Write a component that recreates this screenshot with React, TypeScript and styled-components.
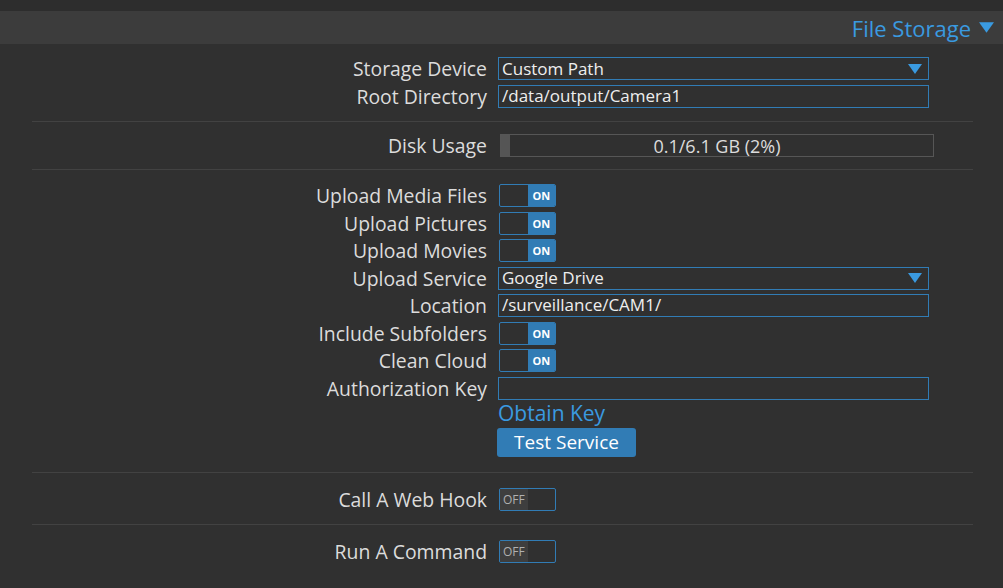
import React from 'react';
import styled, {createGlobalStyle} from 'styled-components';

const GlobalStyle = createGlobalStyle`
  body {
    margin: 0;
    background: #303030;
    font-family: "Open Sans", "DejaVu Sans", sans-serif;
  }
`

const BLUE = '#317cb5'
const LINK = '#3a9ae0'

const Arrow = ({w, h}: {w: number, h: number}) => (
    <svg width={w} height={h} viewBox="0 0 14 10">
        <polygon points="0,0 14,0 7,10" fill={LINK}/>
    </svg>
)

const Toggle = ({on}: {on: boolean}) => (
    <ToggleBox>
        <ToggleHalf $active={!on}>{!on && 'OFF'}</ToggleHalf>
        <ToggleHalf $active={on} $on>{on && 'ON'}</ToggleHalf>
    </ToggleBox>
)

const Row = ({label, height = 27.5, children}: { label?: string, height?: number, children: React.ReactNode }) => (
    <RowGrid style={{height}}>
        <Label>{label}</Label>
        <Cell>{children}</Cell>
    </RowGrid>
)

const disk = {used: 0.1, total: 6.1, percent: 2}

export default function App() {
    return (
        <Page>
            <GlobalStyle/>
            <TopStrip/>
            <Header>
                <HeaderTitle>File Storage</HeaderTitle>
                <Arrow w={15} h={11}/>
            </Header>

            <Section $top={11} $bottom={11}>
                <Row label="Storage Device">
                    <Select>
                        <span>Custom Path</span>
                        <Arrow w={14} h={10}/>
                    </Select>
                </Row>
                <Row label="Root Directory">
                    <TextBox>/data/output/Camera1</TextBox>
                </Row>
            </Section>

            <Section $top={11} $bottom={11}>
                <Row label="Disk Usage" height={25}>
                    <DiskBar>
                        <DiskFill style={{width: `${disk.percent}%`}}/>
                        <DiskText>{disk.used}/{disk.total} GB ({disk.percent}%)</DiskText>
                    </DiskBar>
                </Row>
            </Section>

            <Section $top={12} $bottom={11}>
                <Row label="Upload Media Files"><Toggle on/></Row>
                <Row label="Upload Pictures"><Toggle on/></Row>
                <Row label="Upload Movies"><Toggle on/></Row>
                <Row label="Upload Service">
                    <Select>
                        <span>Google Drive</span>
                        <Arrow w={14} h={10}/>
                    </Select>
                </Row>
                <Row label="Location">
                    <TextBox>/surveillance/CAM1/</TextBox>
                </Row>
                <Row label="Include Subfolders"><Toggle on/></Row>
                <Row label="Clean Cloud"><Toggle on/></Row>
                <Row label="Authorization Key">
                    <TextBox/>
                </Row>
                <Row height={22}>
                    <ObtainKey>Obtain Key</ObtainKey>
                </Row>
                <Row height={37}>
                    <TestButton>Test Service</TestButton>
                </Row>
            </Section>

            <Section $top={12.5} $bottom={11}>
                <Row label="Call A Web Hook"><Toggle on={false}/></Row>
            </Section>

            <Section $top={12.5} $bottom={12} $last>
                <Row label="Run A Command"><Toggle on={false}/></Row>
            </Section>
        </Page>
    )
}

// Styles
const Page = styled.div`
  width: 1003px;
  min-height: 588px;
  background: #303030;
`

const TopStrip = styled.div`
  height: 11px;
  background: #2d2d2d;
`

const Header = styled.div`
  display: flex;
  align-items: center;
  justify-content: flex-end;
  gap: 8px;

  height: 33px;
  padding-right: 9px;

  background: #3c3c3c;
`

const HeaderTitle = styled.span`
  color: ${LINK};
  font-size: 22px;
  line-height: 1;
`

const Section = styled.div<{ $top: number, $bottom: number, $last?: boolean }>`
  margin: 0 30px 0 32px;
  padding: ${p => p.$top}px 0 ${p => p.$bottom}px;
  border-bottom: ${p => p.$last ? 'none' : '1px solid #424242'};
`

const RowGrid = styled.div`
  display: grid;
  grid-template-columns: 455px 1fr;
  column-gap: 11px;
  align-items: center;
`

const Label = styled.div`
  text-align: right;
  color: #dcdcdc;
  font-size: 19.4px;
  line-height: 1.2;
  white-space: nowrap;
`

const Cell = styled.div`
  display: flex;
  align-items: center;
`

const TextBox = styled.div`
  box-sizing: border-box;
  width: 431px;
  height: 23px;
  padding: 0 3px;

  border: 1px solid ${BLUE};
  color: #eeeeee;
  font-size: 17px;
  line-height: 20px;
  white-space: nowrap;
`

const Select = styled(TextBox)`
  display: flex;
  align-items: center;
  justify-content: space-between;
  padding-right: 6px;
`

const DiskBar = styled.div`
  position: relative;
  box-sizing: border-box;
  width: 434px;
  height: 23px;
  margin-left: 2px;

  border: 1px solid #565656;
`

const DiskFill = styled.div`
  height: 100%;
  background: #555555;
`

const DiskText = styled.div`
  position: absolute;
  inset: 0;
  display: flex;
  align-items: center;
  justify-content: center;

  color: #dcdcdc;
  font-size: 18px;
`

const ToggleBox = styled.div`
  box-sizing: border-box;
  display: flex;
  width: 57px;
  height: 23px;
  margin-left: 1px;

  border: 1px solid ${BLUE};
  border-radius: 2px;
  overflow: hidden;
`

const ToggleHalf = styled.div<{ $active: boolean, $on?: boolean }>`
  flex: 1;
  display: flex;
  align-items: center;
  justify-content: center;

  background: ${p => !p.$active ? 'transparent' : p.$on ? BLUE : '#3e3e3e'};
  color: ${p => p.$on ? '#ffffff' : '#b0b0b0'};
  font-size: ${p => p.$on ? 11 : 12}px;
  font-weight: ${p => p.$on ? 700 : 400};
`

const ObtainKey = styled.span`
  color: ${LINK};
  font-size: 21px;
  line-height: 1;
  cursor: pointer;
`

const TestButton = styled.button`
  width: 139px;
  height: 29px;
  margin-left: -1px;
  padding: 0;

  border: none;
  border-radius: 3px;
  background: ${BLUE};
  color: #ffffff;
  font-family: inherit;
  font-size: 19px;
  line-height: 1;
`
